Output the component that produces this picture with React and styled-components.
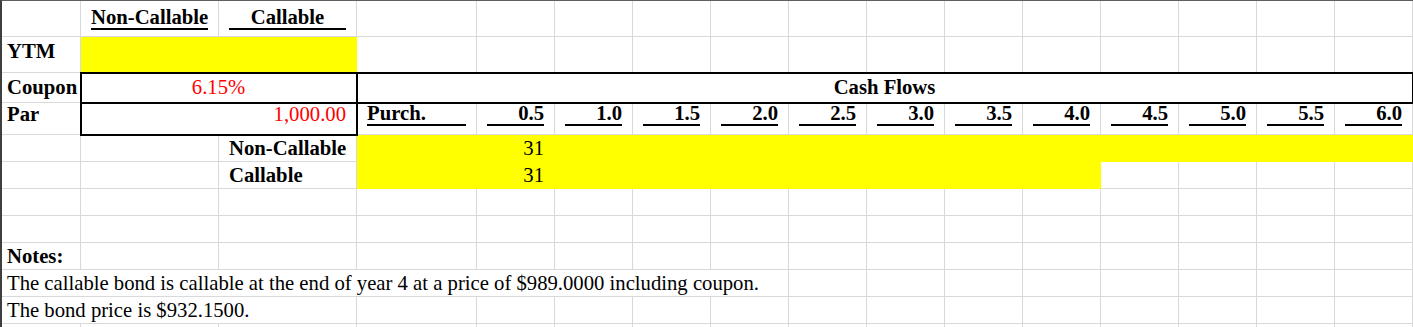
import React from 'react';
import styled, { createGlobalStyle, css } from 'styled-components';

const GRID = '#d9d9d9';
const YELLOW = '#ffff00';

const GlobalStyle = createGlobalStyle`
  html, body { margin: 0; padding: 0; background: #ffffff; }
  body { font-family: "Liberation Serif", "Times New Roman", serif; }
`;

const Sheet = styled.div`
  display: grid;
  grid-template-columns: 79px 138px 138px 120px repeat(12, 78px);
  grid-template-rows: 36px 36px 30px 32px repeat(8, 27px);
  width: 1413px;
  box-sizing: border-box;
  border-top: 1px solid #5e5e5e;
  border-left: 2px solid #3f3f3f;
  font-family: "Liberation Serif", "Times New Roman", serif;
  font-size: 20.7px;
  color: #000;
`;

const justify = { left: 'flex-start', center: 'center', right: 'flex-end' };

const Cell = styled.div`
  grid-column: span ${(p) => p.$span || 1};
  box-sizing: border-box;
  display: flex;
  min-width: 0;
  align-items: ${(p) => (p.$top ? 'flex-start' : 'center')};
  justify-content: ${(p) => justify[p.$align || 'left']};
  padding: ${(p) => p.$padTop || 0}px ${(p) => (p.$pad ?? 10)}px 0;
  border-right: 1px solid ${(p) => p.$fill || GRID};
  border-bottom: 1px solid ${(p) => p.$fill || GRID};
  background: ${(p) => p.$fill || 'transparent'};
  color: ${(p) => (p.$red ? '#ff0000' : '#000')};
  font-weight: ${(p) => (p.$bold ? 700 : 400)};
  line-height: 23px;
  white-space: nowrap;
  ${(p) =>
    p.$box &&
    css`
      position: relative;
      z-index: 1;
      outline: 2px solid #000;
      outline-offset: -1px;
    `}
`;

const Ruled = styled.span`
  display: block;
  flex: 1;
  text-align: ${(p) => p.$align || 'left'};
  line-height: 21px;
  font-weight: 700;
  border-bottom: 2px solid #000;
`;

const Empty = ({ n, fill }) =>
  Array.from({ length: n }, (_, i) => <Cell key={i} $fill={fill} />);

const periods = ['0.5', '1.0', '1.5', '2.0', '2.5', '3.0', '3.5', '4.0', '4.5', '5.0', '5.5', '6.0'];

export default function App() {
  return (
    <>
      <GlobalStyle />
      <Sheet>
        {/* Row 1 */}
        <Cell $pad={5} />
        <Cell>
          <Ruled $align="center">Non-Callable</Ruled>
        </Cell>
        <Cell>
          <Ruled $align="center">Callable</Ruled>
        </Cell>
        <Empty n={13} />

        {/* Row 2 */}
        <Cell $pad={5} $bold $top $padTop={3}>YTM</Cell>
        <Cell $fill={YELLOW} />
        <Cell $fill={YELLOW} />
        <Empty n={13} />

        {/* Row 3 */}
        <Cell $pad={5} $bold>Coupon</Cell>
        <Cell $span={2} $align="center" $red $box>6.15%</Cell>
        <Cell $span={13} $align="center" $bold $box>Cash Flows</Cell>

        {/* Row 4 */}
        <Cell $pad={5} $bold $top>Par</Cell>
        <Cell $span={2} $align="right" $red $box $top>1,000.00</Cell>
        <Cell $top>
          <Ruled>Purch.</Ruled>
        </Cell>
        {periods.map((p) => (
          <Cell key={p} $top>
            <Ruled $align="right">{p}</Ruled>
          </Cell>
        ))}

        {/* Row 5 */}
        <Cell $pad={5} />
        <Cell />
        <Cell $bold>Non-Callable</Cell>
        <Cell $fill={YELLOW} />
        <Cell $fill={YELLOW} $align="right">31</Cell>
        <Empty n={11} fill={YELLOW} />

        {/* Row 6 */}
        <Cell $pad={5} />
        <Cell />
        <Cell $bold>Callable</Cell>
        <Cell $fill={YELLOW} />
        <Cell $fill={YELLOW} $align="right">31</Cell>
        <Empty n={7} fill={YELLOW} />
        <Empty n={4} />

        {/* Rows 7-8 */}
        <Empty n={16} />
        <Empty n={16} />

        {/* Row 9 */}
        <Cell $pad={5} $bold>Notes:</Cell>
        <Empty n={15} />

        {/* Row 10 */}
        <Cell $pad={5} $span={8}>
          The callable bond is callable at the end of year 4 at a price of $989.0000 including coupon.
        </Cell>
        <Empty n={8} />

        {/* Row 11 */}
        <Cell $pad={5} $span={3}>The bond price is $932.1500.</Cell>
        <Empty n={13} />

        {/* Row 12 */}
        <Empty n={16} />
      </Sheet>
    </>
  );
}
